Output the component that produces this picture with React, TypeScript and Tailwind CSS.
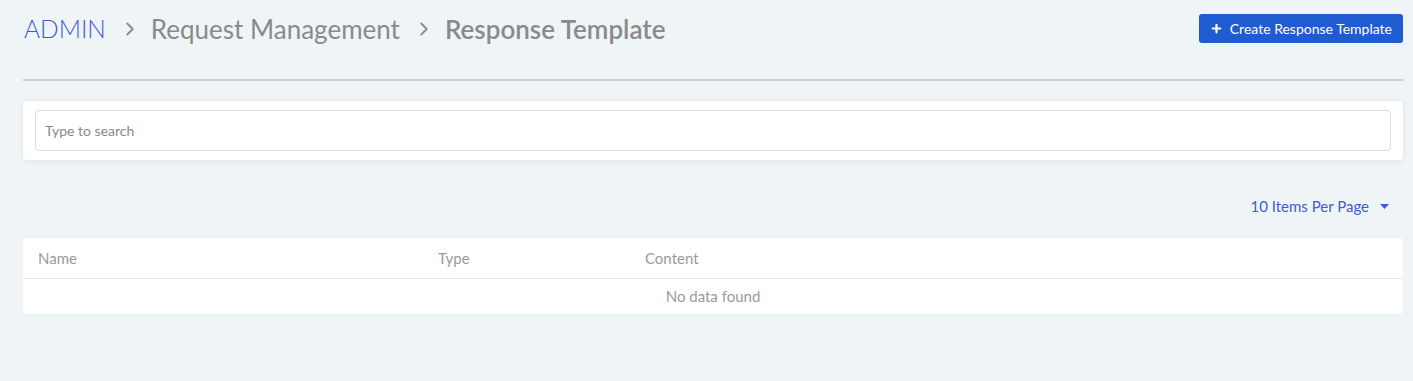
import { ChevronRight, Plus } from "lucide-react";

export default function App() {
  return (
    <div
      className="min-h-screen bg-[#eff4f7] pl-[23px] pr-[10px] pt-[14px]"
      style={{ fontFamily: "Lato, 'Open Sans', sans-serif" }}
    >
      <div className="flex items-start justify-between">
        <div className="flex items-center pl-[1px] text-[26px] leading-[30px]">
          <span className="text-[24.5px] font-light text-[#3f5bd8]">ADMIN</span>
          <ChevronRight size={22} strokeWidth={2} className="ml-[13px] mr-[10px] text-[#8a8a8a]" />
          <span className="text-[#8a8a8a]">Request Management</span>
          <ChevronRight size={22} strokeWidth={2} className="ml-[13px] mr-[10px] text-[#8a8a8a]" />
          <span className="font-semibold text-[#8a8a8a]">Response Template</span>
        </div>
        <button className="flex h-[29px] items-center gap-[7px] rounded-[3px] bg-[#1f5bd1] px-[11px] text-[14px] text-white">
          <Plus size={13} strokeWidth={4} />
          Create Response Template
        </button>
      </div>

      <div className="mt-[35px] h-[2px] bg-[#cbd0d3]" />

      <div className="mt-[20px] rounded-[4px] bg-white px-[12px] py-[9px] shadow-[0_1px_6px_rgba(0,0,0,0.08)]">
        <input
          placeholder="Type to search"
          className="block h-[41px] w-full rounded-[4px] border border-[#dcdcdc] px-[9px] text-[14px] text-[#555] placeholder:text-[#888] outline-none"
        />
      </div>

      <div className="mt-[35px] flex justify-end pr-[14px]">
        <button className="flex items-center gap-[11px] text-[15px] text-[#3f5bd8]">
          10 Items Per Page
          <svg width="9" height="5" viewBox="0 0 9 5">
            <path d="M0 0h9L4.5 5z" fill="#3f5bd8" />
          </svg>
        </button>
      </div>

      <div className="mt-[20px] rounded-[4px] bg-white">
        <table className="w-full text-[15px]">
          <thead>
            <tr className="border-b border-[#e8e8e8] text-left text-[#9a9a9a]">
              <th className="h-[41px] w-[415px] pl-[15px] font-normal">Name</th>
              <th className="w-[207px] font-normal">Type</th>
              <th className="font-normal">Content</th>
            </tr>
          </thead>
          <tbody>
            <tr>
              <td colSpan={3} className="h-[35px] text-center text-[#9a9a9a]">
                No data found
              </td>
            </tr>
          </tbody>
        </table>
      </div>
    </div>
  );
}
